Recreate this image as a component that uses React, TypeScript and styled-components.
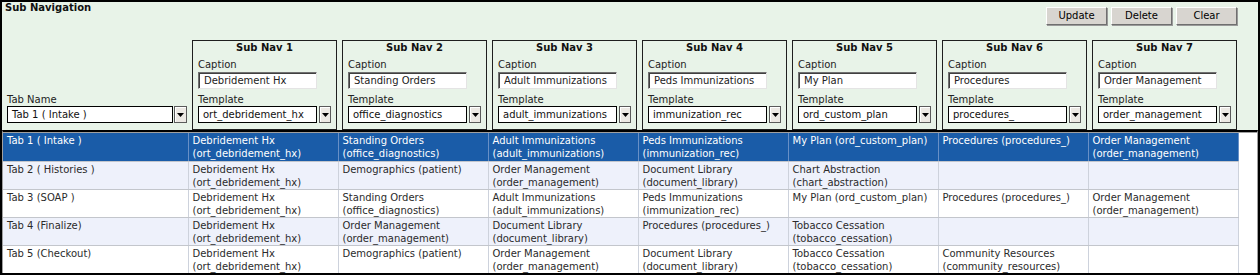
import styled, { createGlobalStyle } from 'styled-components'

const GlobalStyle = createGlobalStyle`
    html, body {
        margin: 0;
        padding: 0;
        background: #ffffff;
    }
    * {
        box-sizing: border-box;
    }
`

const FONT = `'DejaVu Sans', Verdana, sans-serif`

type SubNav = { caption: string; template: string }

const subNavs: SubNav[] = [
    { caption: 'Debridement Hx', template: 'ort_debridement_hx' },
    { caption: 'Standing Orders', template: 'office_diagnostics' },
    { caption: 'Adult Immunizations', template: 'adult_immunizations' },
    { caption: 'Peds Immunizations', template: 'immunization_rec' },
    { caption: 'My Plan', template: 'ord_custom_plan' },
    { caption: 'Procedures', template: 'procedures_' },
    { caption: 'Order Management', template: 'order_management' },
]

const DH = 'Debridement Hx (ort_debridement_hx)'
const SO = 'Standing Orders (office_diagnostics)'
const AI = 'Adult Immunizations (adult_immunizations)'
const PI = 'Peds Immunizations (immunization_rec)'
const MP = 'My Plan (ord_custom_plan)'
const PR = 'Procedures (procedures_)'
const OM = 'Order Management (order_management)'
const DG = 'Demographics (patient)'
const DL = 'Document Library (document_library)'
const CA = 'Chart Abstraction (chart_abstraction)'
const TC = 'Tobacco Cessation (tobacco_cessation)'
const CR = 'Community Resources (community_resources)'

const rows: string[][] = [
    ['Tab 1 ( Intake )', DH, SO, AI, PI, MP, PR, OM],
    ['Tab 2 ( Histories )', DH, DG, OM, DL, CA, '', ''],
    ['Tab 3 (SOAP )', DH, SO, AI, PI, MP, PR, OM],
    ['Tab 4 (Finalize)', DH, OM, DL, PR, TC, '', ''],
    ['Tab 5 (Checkout)', DH, DG, OM, DL, TC, CR, ''],
]

export default function App() {
    return (
        <>
            <GlobalStyle />
            <Frame>
                <Panel>
                    <Header>
                        <Title>Sub Navigation</Title>
                        <ButtonBar>
                            <ToolButton>Update</ToolButton>
                            <ToolButton>Delete</ToolButton>
                            <ToolButton>Clear</ToolButton>
                        </ButtonBar>
                    </Header>
                    <NavRow>
                        <TabField>
                            <FieldLabel>Tab Name</FieldLabel>
                            <Dropdown
                                value="Tab 1 ( Intake )"
                                $width={166}
                                $arrowWidth={13}
                                $gap={1}
                            />
                        </TabField>
                        {subNavs.map((nav, i) => (
                            <NavBox key={i}>
                                <NavTitle>Sub Nav {i + 1}</NavTitle>
                                <FieldLabel>Caption</FieldLabel>
                                <CaptionInput readOnly value={nav.caption} />
                                <FieldLabel $top={4}>Template</FieldLabel>
                                <Dropdown
                                    value={nav.template}
                                    $width={120}
                                    $arrowWidth={12}
                                    $gap={2}
                                />
                            </NavBox>
                        ))}
                    </NavRow>
                </Panel>
                <GridFrame>
                    <Grid>
                        <colgroup>
                            <col style={{ width: 185 }} />
                            {subNavs.map((_, i) => (
                                <col key={i} style={{ width: 150 }} />
                            ))}
                            <col />
                        </colgroup>
                        <tbody>
                            {rows.map((row, r) => (
                                <Row key={r} $selected={r === 0} $alt={r % 2 === 1}>
                                    {row.map((cell, c) => (
                                        <Cell key={c} $selected={r === 0}>
                                            {cell}
                                        </Cell>
                                    ))}
                                    <Filler />
                                </Row>
                            ))}
                        </tbody>
                    </Grid>
                </GridFrame>
            </Frame>
        </>
    )
}

function Dropdown({
    value,
    $width,
    $arrowWidth,
    $gap,
}: {
    value: string
    $width: number
    $arrowWidth: number
    $gap: number
}) {
    return (
        <SelectWrap>
            <SelectBox style={{ width: $width }}>{value}</SelectBox>
            <ArrowButton style={{ width: $arrowWidth, marginLeft: $gap }}>
                <svg width="7" height="4" viewBox="0 0 7 4">
                    <path d="M0 0 H7 L3.5 4 Z" fill="#000" />
                </svg>
            </ArrowButton>
        </SelectWrap>
    )
}

const Frame = styled.div`
    width: 1260px;
    height: 275px;
    border: 2px solid #000;
    background: #e8f3e8;
    display: flex;
    flex-direction: column;
    font-family: ${FONT};
    font-size: 10px;
    color: #1a1a1a;
    overflow: hidden;
`

const Panel = styled.div`
    height: 128px;
    display: flex;
    flex-direction: column;
    flex-shrink: 0;
`

const Header = styled.div`
    height: 38px;
    display: flex;
    justify-content: space-between;
    align-items: flex-start;
    padding-left: 3px;
`

const Title = styled.div`
    font-weight: bold;
    font-size: 10px;
    line-height: 13px;
    margin-top: -1px;
    color: #111;
`

const ButtonBar = styled.div`
    display: flex;
    gap: 4px;
    margin-top: 5px;
    margin-right: 21px;
`

const ToolButton = styled.button`
    width: 61px;
    height: 18px;
    padding: 0;
    font-family: ${FONT};
    font-size: 10px;
    color: #000;
    background: #d8d5d0;
    border: 1px solid;
    border-color: #ffffff #6f6f6f #6f6f6f #ffffff;
    box-shadow: 1px 1px 0 #9a9a9a;
    line-height: 14px;
`

const NavRow = styled.div`
    flex: 1;
    display: flex;
    align-items: flex-end;
    gap: 5px;
    padding-left: 5px;
`

const TabField = styled.div`
    width: 180px;
    display: flex;
    flex-direction: column;
    padding-bottom: 7px;
`

const NavBox = styled.div`
    width: 145px;
    height: 90px;
    border: 1px solid #1e1e1e;
    padding: 0 5px 6px 5px;
    display: flex;
    flex-direction: column;
`

const NavTitle = styled.div`
    font-weight: bold;
    font-size: 10px;
    line-height: 14px;
    text-align: center;
    margin-bottom: 3px;
    color: #111;
`

const FieldLabel = styled.div<{ $top?: number }>`
    line-height: 13px;
    margin-top: ${({ $top }) => $top ?? 0}px;
    color: #222;
`

const CaptionInput = styled.input`
    width: 119px;
    height: 18px;
    margin-top: 1px;
    padding: 0 0 0 5px;
    font-family: ${FONT};
    font-size: 10px;
    color: #222;
    background: #fff;
    border: 1px solid;
    border-color: #707070 #e4e4e4 #e4e4e4 #707070;
    box-shadow: inset 1px 1px 0 #404040;
    outline: none;
`

const SelectWrap = styled.div`
    display: flex;
    height: 17px;
`

const SelectBox = styled.div`
    height: 17px;
    border: 1px solid #000;
    background: #fff;
    padding-left: 4px;
    line-height: 15px;
    color: #111;
    white-space: nowrap;
    overflow: hidden;
`

const ArrowButton = styled.div`
    height: 17px;
    border: 1px solid #5a5a5a;
    background: #ece9e4;
    box-shadow: inset 1px 1px 0 #ffffff;
    display: flex;
    align-items: center;
    justify-content: center;
`

const GridFrame = styled.div`
    flex: 1;
    border-top: 2px solid #000;
    background: #fff;
    border-left: 1px solid #a0a0a0;
    border-right: 1px solid #a0a0a0;
    &::before {
        content: '';
        display: block;
        height: 1px;
        background: #a0a0a0;
    }
`

const Grid = styled.table`
    width: 100%;
    table-layout: fixed;
    border-collapse: collapse;
    font-family: ${FONT};
    font-size: 10px;
`

const Row = styled.tr<{ $selected: boolean; $alt: boolean }>`
    height: 28px;
    background: ${({ $selected, $alt }) =>
        $selected ? '#1a5ca8' : $alt ? '#eef1fb' : '#ffffff'};
    color: ${({ $selected }) => ($selected ? '#ffffff' : '#2b2b2b')};
`

const Cell = styled.td<{ $selected: boolean }>`
    vertical-align: top;
    padding: 1px 4px 0 4px;
    line-height: 13px;
    border-right: 1px solid ${({ $selected }) => ($selected ? '#6890c6' : '#cdd2dc')};
    border-bottom: 1px solid #c3c6cc;
    overflow: hidden;
`

const Filler = styled.td`
    background: #fff;
    border-left: 1px solid #b8b8b8;
`
